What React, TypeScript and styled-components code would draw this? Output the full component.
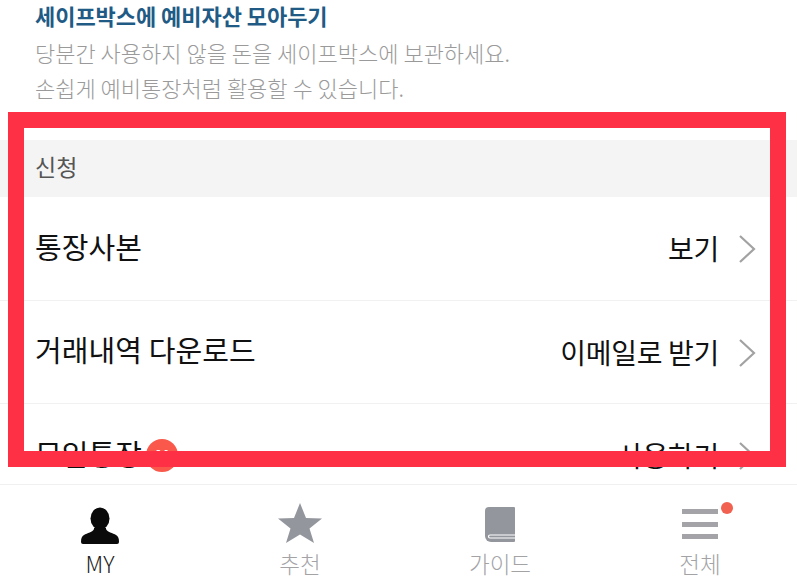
import styled, { createGlobalStyle } from 'styled-components';

const GlobalStyle = createGlobalStyle`
  html, body {
    margin: 0;
    padding: 0;
    background: #fff;
  }
  body {
    font-family: "Noto Sans CJK KR", "Noto Sans", sans-serif;
  }
`;

const Screen = styled.div`
  position: relative;
  width: 797px;
  height: 586px;
  display: flex;
  flex-direction: column;
  overflow: hidden;
  background: #fff;
`;

const Content = styled.div`
  flex: 1;
  min-height: 0;
  overflow: hidden;
`;

const Intro = styled.section`
  height: 140px;
  box-sizing: border-box;
  padding: 0 35px;
`;

const IntroTitle = styled.h2`
  margin: 0;
  height: 35px;
  font-size: 22px;
  line-height: 31px;
  font-weight: 700;
  color: #1f5b85;
  letter-spacing: -0.05px;
`;

const IntroText = styled.p`
  margin: 0;
  font-size: 22px;
  line-height: 34.5px;
  font-weight: 300;
  color: #9a9a9a;
  letter-spacing: 0;
`;

const SectionHeader = styled.div`
  height: 57px;
  box-sizing: border-box;
  padding: 0 0 5px 35px;
  display: flex;
  align-items: center;
  background: #f4f4f4;
  font-size: 23px;
  color: #555;
`;

const Row = styled.div`
  height: 103.5px;
  box-sizing: border-box;
  padding: 0 40px 0 35px;
  display: flex;
  align-items: center;
  justify-content: space-between;
  border-bottom: 1px solid #f1f1f1;
`;

const RowLabel = styled.span`
  margin-bottom: 5px;
  font-size: 29px;
  color: #111;
  letter-spacing: 0.1px;
`;

const RowAction = styled.span`
  display: flex;
  align-items: center;
  gap: 18px;
  font-size: 28px;
  color: #111;
  letter-spacing: -0.3px;
`;

const ChevronMark = styled.svg`
  margin-top: 2px;
`;

const Badge = styled.span`
  position: absolute;
  left: 146px;
  top: 439px;
  width: 32px;
  height: 33px;
  border-radius: 50%;
  background: #f9584a;
  color: #fff;
  font-size: 19px;
  line-height: 33px;
  font-weight: 700;
  text-align: center;
`;

const Frame = styled.div`
  position: absolute;
  left: 8px;
  top: 112px;
  width: 778px;
  height: 355px;
  box-sizing: border-box;
  border: 16px solid #fe3045;
`;

const NavBar = styled.nav`
  width: 800px;
  height: 102px;
  flex-shrink: 0;
  box-sizing: border-box;
  border-top: 1px solid #f0f0f0;
  display: grid;
  grid-template-columns: repeat(4, 200px);
  background: #fff;
`;

const NavItem = styled.div<{ $active?: boolean }>`
  padding-top: 18px;
  display: flex;
  flex-direction: column;
  align-items: center;
  font-size: 22.5px;
  line-height: 32px;
  font-weight: 300;
  color: ${(p) => (p.$active ? '#222' : '#a3a3a6')};
`;

const NavIcon = styled.div`
  position: relative;
  width: 44px;
  height: 44px;
`;

const NavDot = styled.span`
  position: absolute;
  left: 43px;
  top: -1px;
  width: 12px;
  height: 12px;
  border-radius: 50%;
  background: #f2604f;
`;

const Chevron = () => (
  <ChevronMark width="20" height="30" viewBox="0 0 20 30" fill="none">
    <path d="M3 2 L17 15 L3 28" stroke="#a2a2a2" strokeWidth="2.2" />
  </ChevronMark>
);

const PersonIcon = () => (
  <svg width="44" height="44" viewBox="0 0 44 44" fill="#0a0a0a">
    <ellipse cx="22" cy="15.500" rx="9.500" ry="11" />
    <path d="M16 25 h12 v1 c1 3 7 4 10 6 c2 1 3 3 3 7 a2 2 0 0 1-2 2 H5 a2 2 0 0 1-2-2 c0-4 1-6 3-7 c3-2 9-3 10-6 z" />
  </svg>
);

const StarIcon = () => (
  <svg width="44" height="44" viewBox="0 0 44 44" fill="#94969e">
    <path d="M22 0 L28 15 L44 15.500 L31.500 25.500 L36 40 L22 31.500 L8 40 L12.500 25.500 L0 15.500 L16 15 Z" />
  </svg>
);

const BookIcon = () => (
  <svg width="44" height="44" viewBox="0 0 44 44">
    <path d="M7 8 a4 4 0 0 1 4-4 h25 a1 1 0 0 1 1 1 v33 a1 1 0 0 1-1 1 H13 a6 6 0 0 1-6-6 z" fill="#94969e" />
    <path d="M37 32 H12 a1.500 1.500 0 0 0 0 3 H37" fill="none" stroke="#fff" strokeWidth="1.2" />
  </svg>
);

const MenuIcon = () => (
  <svg width="44" height="44" viewBox="0 0 44 44" fill="#a3a3a8">
    <rect x="4" y="6" width="36" height="5" />
    <rect x="4" y="19" width="36" height="5" />
    <rect x="4" y="31" width="36" height="5" />
  </svg>
);

const rows = [
  { label: '통장사본', action: '보기' },
  { label: '거래내역 다운로드', action: '이메일로 받기' },
  { label: '모임통장', action: '사용하기' },
];

export default function App() {
  return (
    <Screen>
      <GlobalStyle />
      <Content>
        <Intro>
          <IntroTitle>세이프박스에 예비자산 모아두기</IntroTitle>
          <IntroText>당분간 사용하지 않을 돈을 세이프박스에 보관하세요.</IntroText>
          <IntroText>손쉽게 예비통장처럼 활용할 수 있습니다.</IntroText>
        </Intro>
        <SectionHeader>신청</SectionHeader>
        {rows.map((row) => (
          <Row key={row.label}>
            <RowLabel>{row.label}</RowLabel>
            <RowAction>
              {row.action}
              <Chevron />
            </RowAction>
          </Row>
        ))}
      </Content>
      <NavBar>
        <NavItem $active>
          <NavIcon>
            <PersonIcon />
          </NavIcon>
          MY
        </NavItem>
        <NavItem>
          <NavIcon>
            <StarIcon />
          </NavIcon>
          추천
        </NavItem>
        <NavItem>
          <NavIcon>
            <BookIcon />
          </NavIcon>
          가이드
        </NavItem>
        <NavItem>
          <NavIcon>
            <MenuIcon />
            <NavDot />
          </NavIcon>
          전체
        </NavItem>
      </NavBar>
      <Badge>N</Badge>
      <Frame />
    </Screen>
  );
}
